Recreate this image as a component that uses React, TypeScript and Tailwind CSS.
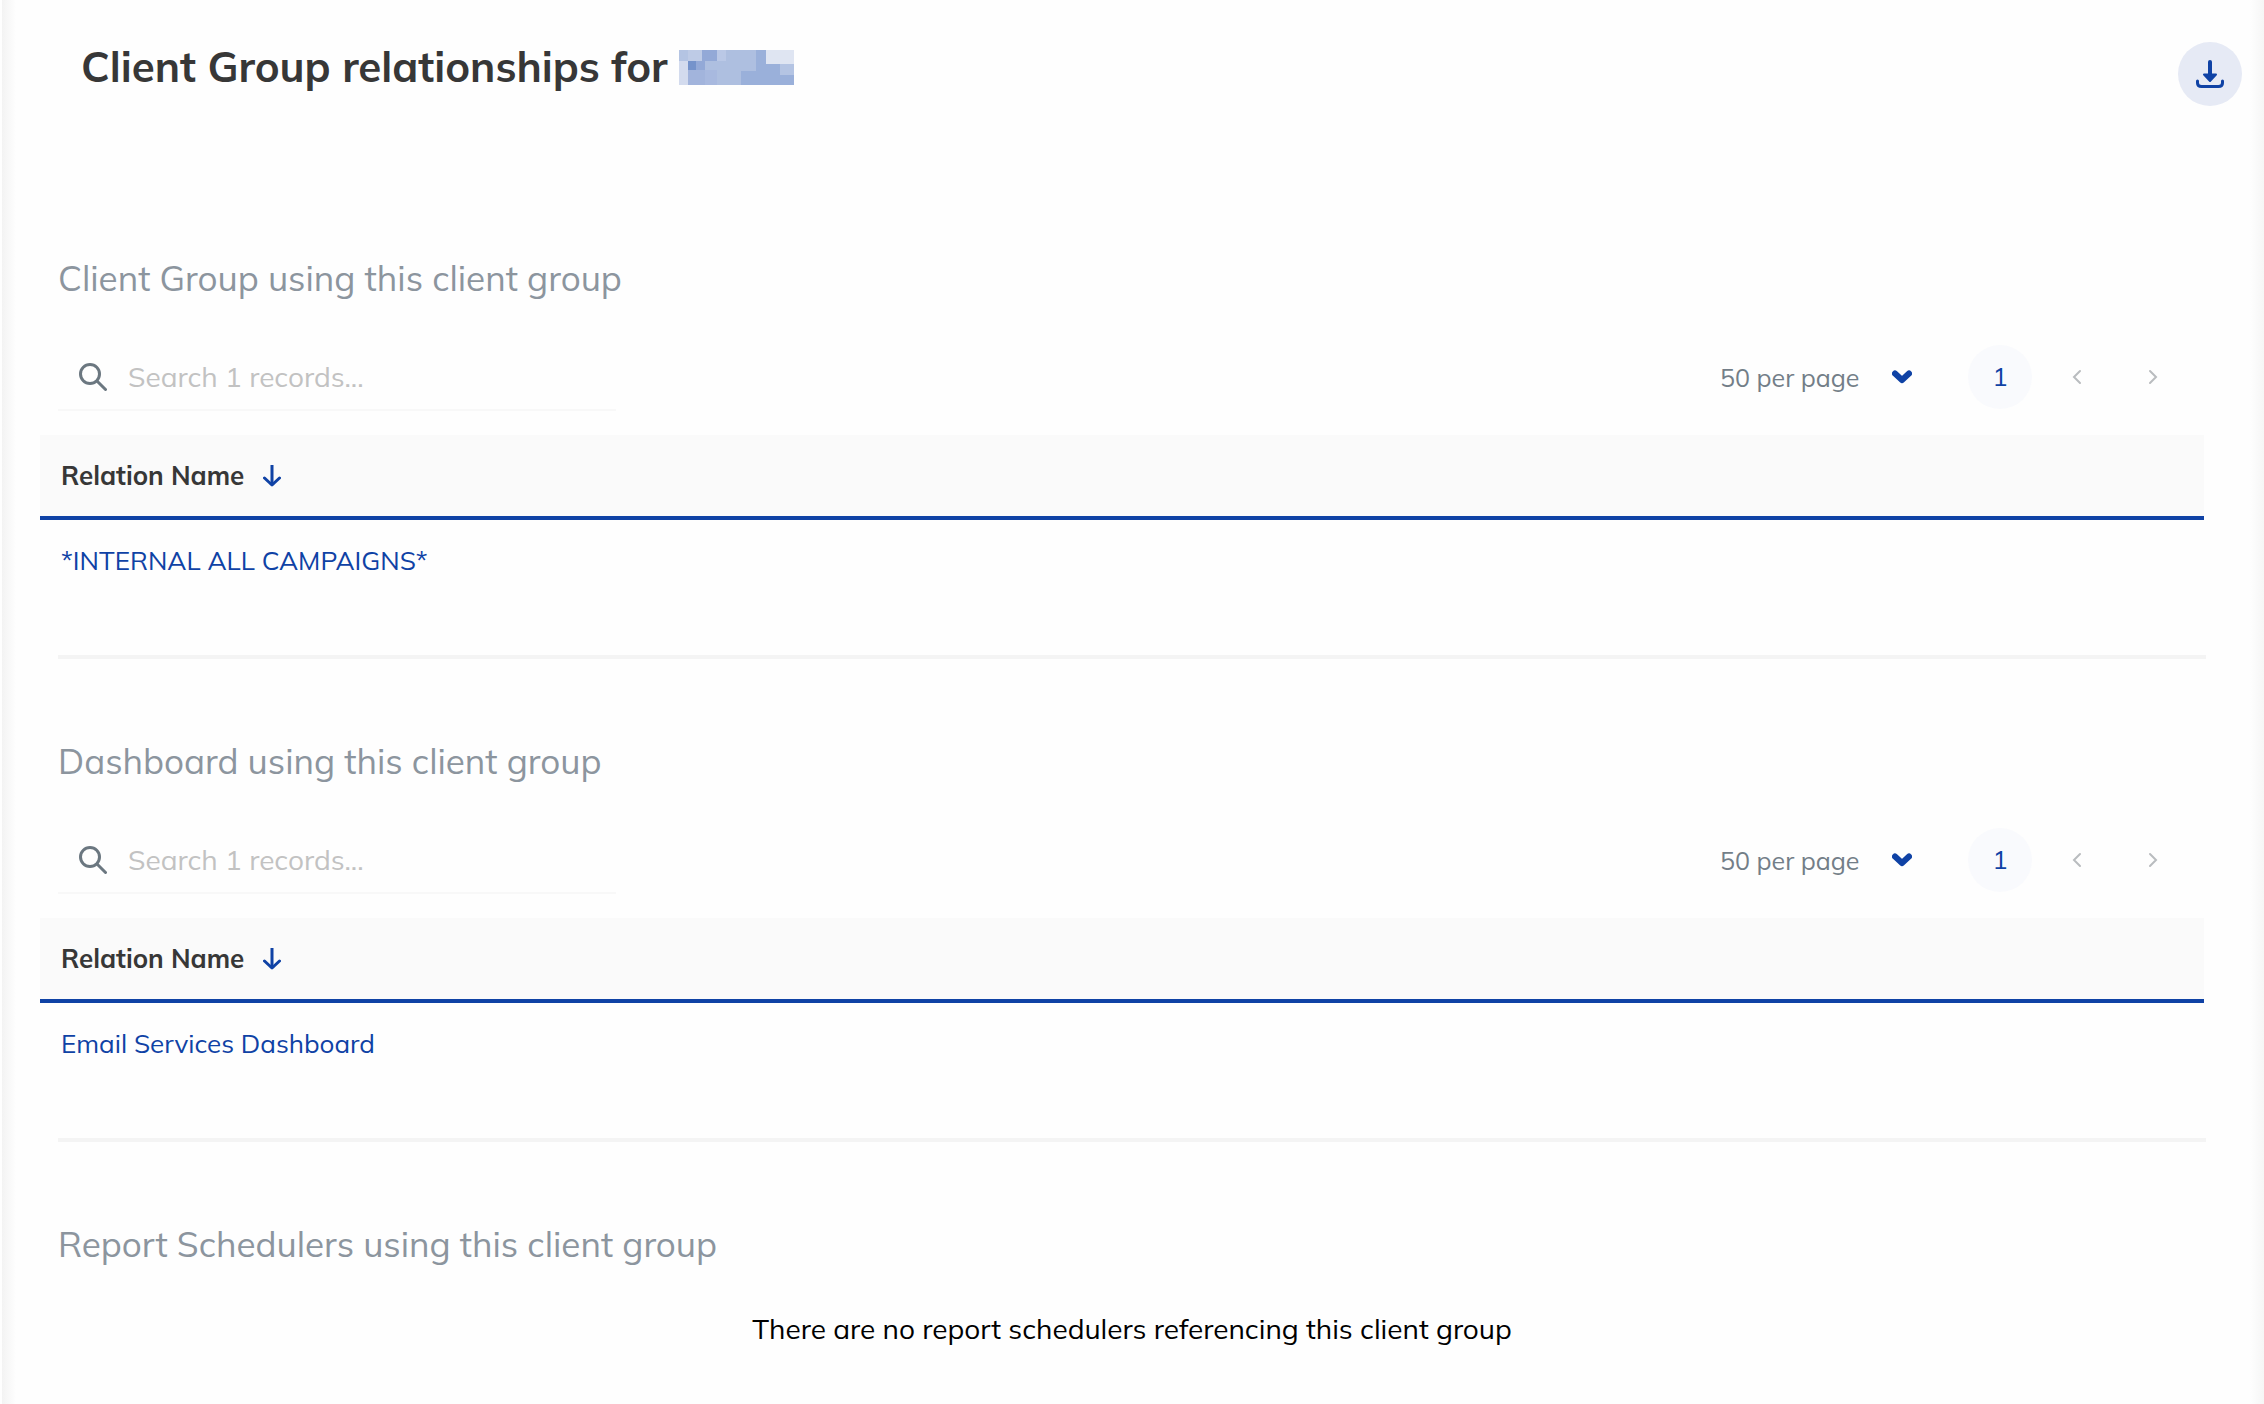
import { useId, useState } from "react";

type Relation = { id: number; name: string };

type RelationSectionProps = {
  title: string;
  relations: Relation[];
};

const clientGroups: Relation[] = [{ id: 1, name: "*INTERNAL ALL CAMPAIGNS*" }];
const dashboards: Relation[] = [{ id: 1, name: "Email Services Dashboard" }];

function DownloadIcon() {
  return (
    <svg width="28" height="28" viewBox="0 0 28 28" fill="none" aria-hidden="true">
      <path d="M14 2v13" stroke="currentColor" strokeWidth="4" strokeLinecap="round" />
      <path d="M8 14.500h12l-6 6.500z" fill="currentColor" stroke="currentColor" strokeWidth="2" strokeLinejoin="round" />
      <path
        d="M1.500 21v2q0 3.500 4 3.500h17q4 0 4-3.500v-2"
        stroke="currentColor"
        strokeWidth="3"
        strokeLinecap="round"
      />
    </svg>
  );
}

function SearchIcon() {
  return (
    <svg width="28" height="28" viewBox="0 0 28 28" fill="none" aria-hidden="true">
      <circle cx="11" cy="11" r="9.500" stroke="currentColor" strokeWidth="3" />
      <path d="M18 18l8.500 8.500" stroke="currentColor" strokeWidth="3" strokeLinecap="round" />
    </svg>
  );
}

function SortIcon() {
  return (
    <svg width="18" height="22" viewBox="0 0 18 22" fill="none" aria-hidden="true">
      <path d="M9 0v19" stroke="currentColor" strokeWidth="3" />
      <path
        d="M1.500 13L9 20l7.500-7"
        stroke="currentColor"
        strokeWidth="3"
        strokeLinecap="round"
        strokeLinejoin="round"
      />
    </svg>
  );
}

// Pixelated block that hides the client name
function RedactedName() {
  return (
    <svg width="115" height="35" viewBox="0 0 345 105" shapeRendering="crispEdges" role="img" aria-label="Hidden name">
      <path fill="#aebfe0" d="M0 0h345v105H0z" />
      <path fill="#b4c4e3" d="M0 0h27v33H0z" />
      <path fill="#becbe6" d="M27 0h42v33H27z" />
      <path fill="#93a9d7" d="M69 0h45v33H69z" />
      <path fill="#bac8e6" d="M114 0h27v33h-27z" />
      <path fill="#d3dbee" d="M0 33h27v72H0z" />
      <path fill="#7593cb" d="M27 33h24v27H27z" />
      <path fill="#93a9d7" d="M51 33h27v27H51z" />
      <path fill="#a2b4dc" d="M27 60h51v45H27z" />
      <path fill="#a8b9df" d="M78 60h36v45H78z" />
      <path fill="#9ab0da" d="M231 0h30v42h42v33h42v30H186V63h45z" />
      <path fill="#dfe5f2" d="M261 0h84v42h-84z" />
      <path fill="#b4c4e3" d="M303 42h42v33h-42z" />
    </svg>
  );
}

function Pagination() {
  return (
    <div className="flex items-center pt-px text-[26px] leading-10">
      <div className="relative flex items-center text-[25px] text-[#737e88]">
        <select
          aria-label="Records per page"
          defaultValue="50"
          className="h-11 w-[196px] cursor-pointer appearance-none bg-transparent pt-0.5 pr-8 outline-none"
        >
          <option value="50">50 per page</option>
          <option value="100">100 per page</option>
        </select>
        <svg
          className="pointer-events-none absolute right-1 text-[#0f42a5]"
          width="20"
          height="14"
          viewBox="0 0 20 14"
          fill="none"
          aria-hidden="true"
        >
          <path
            d="M3 3.500l7 6.500 7-6.500"
            stroke="currentColor"
            strokeWidth="6"
            strokeLinecap="round"
            strokeLinejoin="round"
          />
        </svg>
      </div>
      <button className="ml-[52px] size-16 rounded-full bg-[#f9fafd] text-[#0f42a5]">1</button>
      <button aria-label="Previous page" disabled className="ml-[13px] flex size-16 items-center justify-center text-[#b9bcbf]">
        <svg width="10" height="16" viewBox="0 0 10 16" fill="none" aria-hidden="true">
          <path d="M8 2L2 8l6 6" stroke="currentColor" strokeWidth="2" strokeLinecap="round" />
        </svg>
      </button>
      <button aria-label="Next page" disabled className="ml-3 flex size-16 items-center justify-center text-[#b9bcbf]">
        <svg width="10" height="16" viewBox="0 0 10 16" fill="none" aria-hidden="true">
          <path d="M2 2l6 6-6 6" stroke="currentColor" strokeWidth="2" strokeLinecap="round" />
        </svg>
      </button>
    </div>
  );
}

function RelationSection({ title, relations }: RelationSectionProps) {
  const [query, setQuery] = useState("");
  const searchId = useId();
  const visible = relations.filter((r) => r.name.toLowerCase().includes(query.toLowerCase()));

  return (
    <section className="mb-[78px]">
      <h2 className="pl-[58px] text-[35px] leading-12 text-[#8c959e]">{title}</h2>

      <div className="mt-[42px] flex items-start justify-between pr-[79px] pl-[58px]">
        <div className="flex h-[67px] w-[558px] items-center gap-[21px] border-b-2 border-[#f8f8f8] pl-[21px] text-[#6b7780]">
          <label htmlFor={searchId} aria-label="Search records">
            <SearchIcon />
          </label>
          <input
            id={searchId}
            type="text"
            value={query}
            onChange={(e) => setQuery(e.target.value)}
            placeholder={`Search ${relations.length} records...`}
            className="min-w-0 flex-1 bg-transparent text-[28px] leading-9 outline-none placeholder:text-[#c2c2c2]"
          />
        </div>
        <Pagination />
      </div>

      <div className="mt-6 mr-[60px] ml-10">
        <table className="w-full border-collapse text-left text-[26px] leading-8">
          <thead>
            <tr className="h-[83px] border-b-4 border-[#0f42a5] bg-[#fafafa]">
              <th className="px-[21px] font-bold text-[#373737]">
                <button className="flex items-center gap-[19px]">
                  Relation Name
                  <span className="text-[#0f42a5]">
                    <SortIcon />
                  </span>
                </button>
              </th>
            </tr>
          </thead>
          <tbody>
            {visible.map((relation) => (
              <tr key={relation.id} className="h-[84px]">
                <td className="px-[21px]">
                  <a href="#" className="text-[#0f42a5] hover:underline">
                    {relation.name}
                  </a>
                </td>
              </tr>
            ))}
          </tbody>
        </table>
      </div>

      <hr className="mt-[53px] mr-[58px] ml-[58px] border-t-4 border-[#f4f4f4]" />
    </section>
  );
}

export default function App() {
  return (
    <div className="flex min-h-screen bg-[#fefefe] font-['Mulish','Open_Sans',sans-serif]">
      {/* Panel edges */}
      <div className="ml-0.5 w-3.5 shrink-0 bg-linear-to-r from-[#f3f3f3] to-[#fefefe]" />

      <main className="-mr-3.5 -ml-4 min-w-0 flex-1">
        <header className="flex items-start justify-between pt-[42px] pr-[22px] pl-[81px]">
          <h1 className="flex items-center gap-[11px] text-[42px] leading-[50px] font-bold text-[#373737]">
            Client Group relationships for
            <RedactedName />
          </h1>
          <button
            aria-label="Download"
            className="flex size-16 items-center justify-center rounded-full bg-[#e6eaf5] text-[#0f42a5]"
          >
            <DownloadIcon />
          </button>
        </header>

        <div className="pt-[148px]">
          <RelationSection title="Client Group using this client group" relations={clientGroups} />
          <RelationSection title="Dashboard using this client group" relations={dashboards} />

          <section className="pb-12">
            <h2 className="pl-[58px] text-[35px] leading-12 text-[#8c959e]">
              Report Schedulers using this client group
            </h2>
            <p className="mt-[37px] text-center text-[28px] leading-12 text-black">
              There are no report schedulers referencing this client group
            </p>
          </section>
        </div>
      </main>

      <div className="w-3.5 shrink-0 bg-linear-to-r from-[#fefefe] to-[#f6f6f6]" />
    </div>
  );
}
